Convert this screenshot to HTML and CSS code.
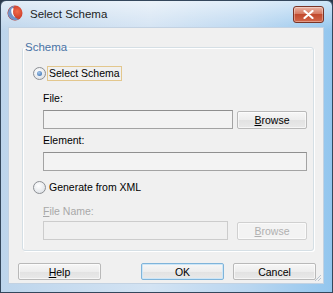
FILE: index.html
```html
<!DOCTYPE html>
<html lang="en">
<head>
    <meta charset="UTF-8">
    <title>Select Schema</title>
    <link rel="stylesheet" href="styles.css">
</head>
<body>
    <div class="window">
        <div class="titlebar">
            <svg class="app-icon" width="16" height="16" viewBox="0 0 16 16">
                <defs>
                    <radialGradient id="ball" cx="0.65" cy="0.4" r="0.7">
                        <stop offset="0" stop-color="#f26a4a"/>
                        <stop offset="1" stop-color="#b8261a"/>
                    </radialGradient>
                </defs>
                <circle cx="8" cy="8" r="7.5" fill="url(#ball)"/>
                <path d="M1 9 C1 4 4 1 8 0.8 C5 3 4.5 6 6 9 C7 12 10 14 12.5 14 C10 15.6 6 15.6 3.5 13.5 C2 12.2 1 10.8 1 9 Z" fill="#6f93c9"/>
                <path d="M4.6 3.8 C3.6 6.5 4.6 10.5 8.3 12.6 C6.2 10.4 5.4 7 6.6 3.4 C6 3.3 5.2 3.4 4.6 3.8 Z" fill="#ffffff"/>
            </svg>
            <span class="title">Select Schema</span>
            <span class="close-btn">
                <svg width="11" height="9" viewBox="0 0 11 9">
                    <path d="M1.5 1 L9.5 8 M9.5 1 L1.5 8" stroke="#ffffff" stroke-width="2.2" stroke-linecap="round"/>
                </svg>
            </span>
        </div>
        <div class="client">
            <fieldset class="group">
                <legend>Schema</legend>
                <div class="group-body">
                    <label class="radio-row">
                        <span class="radio checked"></span>
                        <span class="focus-label">Select Schema</span>
                    </label>

                    <div class="field-label">File:</div>
                    <div class="field-row">
                        <span class="input"></span>
                        <button class="btn browse"><u>B</u>rowse</button>
                    </div>

                    <div class="field-label next">Element:</div>
                    <div class="field-row">
                        <span class="input"></span>
                    </div>

                    <label class="radio-row second">
                        <span class="radio"></span>
                        <span class="radio-text">Generate from XML</span>
                    </label>

                    <div class="field-label disabled name"><u>F</u>ile Name:</div>
                    <div class="field-row wide-gap">
                        <span class="input disabled"></span>
                        <button class="btn browse" disabled><u>B</u>rowse</button>
                    </div>
                </div>
            </fieldset>

            <div class="actions">
                <button class="btn action help"><u>H</u>elp</button>
                <button class="btn action ok">OK</button>
                <button class="btn action cancel">Cancel</button>
            </div>

            <svg class="grip" width="9" height="9" viewBox="0 0 9 9">
                <path d="M8 2 L2 8 M8 5 L5 8 M8 8 L8 8" stroke="#b9c4cf" stroke-width="1"/>
            </svg>
        </div>
    </div>
</body>
</html>
```

FILE: styles.css
```css
html, body {
    margin: 0;
    padding: 0;
}
body {
    width: 333px;
    height: 293px;
    background: #2b3a4c;
    font-family: "Liberation Sans", Arial, sans-serif;
    font-size: 10.5px;
    color: #000;
}
.window {
    position: relative;
    box-sizing: border-box;
    width: 333px;
    height: 293px;
    border: 1px solid #34475c;
    border-radius: 6px 6px 0 0;
    background:
        linear-gradient(to bottom, rgba(255,255,255,0.55), rgba(255,255,255,0) 30px),
        linear-gradient(to right, #bdd5ec, #d3e3f3 45%, #b9d6f0 75%, #93c6ee);
}
.titlebar {
    display: flex;
    align-items: flex-start;
    height: 26px;
    box-sizing: border-box;
    padding: 4px 8px 0 6px;
}
.app-icon {
    display: block;
    flex: none;
}
.title {
    margin: 2px 0 0 7px;
    font-size: 11.5px;
    line-height: 14px;
    color: #1e1e1e;
}
.close-btn {
    display: flex;
    align-items: center;
    justify-content: center;
    margin: 1px 0 0 auto;
    box-sizing: border-box;
    width: 31px;
    height: 17px;
    border: 1px solid #7a3426;
    border-radius: 3px;
    background: linear-gradient(to bottom, #eab3a4, #d67a62 45%, #c24a2e 50%, #d2674a);
    box-shadow: inset 0 0 0 1px rgba(255,255,255,0.35);
}
.close-btn svg {
    display: block;
}
.client {
    position: relative;
    box-sizing: border-box;
    width: 316px;
    height: 257px;
    margin: 0 8px 8px 7px;
    padding: 12px 0 0 13px;
    background: #f0f0f0;
    border: 1px solid #c3d2e2;
}
.group {
    box-sizing: border-box;
    width: 292px;
    margin: 0;
    padding: 0;
    border: 1px solid #d5dfe5;
    border-radius: 3px;
    box-shadow: inset 1px 1px 0 #ffffff, 1px 1px 0 #ffffff;
}
.group legend {
    margin-left: 0;
    padding: 0 2px;
    line-height: 14px;
    color: #4a73a6;
    font-size: 11.5px;
}
.group-body {
    padding: 12px 6px 10px 10px;
}
.radio-row {
    display: flex;
    align-items: center;
    height: 15px;
}
.radio-row.second {
    margin-top: 9px;
}
.radio {
    box-sizing: border-box;
    width: 13px;
    height: 13px;
    border: 1px solid #8c8f94;
    border-radius: 50%;
    background: radial-gradient(circle at 40% 35%, #ffffff, #e3e6ea 70%, #d0d4d9);
    display: flex;
    align-items: center;
    justify-content: center;
}
.radio.checked::after {
    content: "";
    width: 5px;
    height: 5px;
    border-radius: 50%;
    background: radial-gradient(circle at 40% 35%, #a7c8ec, #2a64a8);
}
.focus-label {
    margin-left: 1px;
    padding: 0 1px;
    line-height: 13px;
    border: 1px solid #e3c78d;
}
.radio-text {
    margin-left: 3px;
    line-height: 13px;
}
.field-label {
    margin: 10px 0 0 10px;
    line-height: 14px;
}
.field-label.next {
    margin-top: 4px;
}
.field-label.name {
    margin-top: 9px;
}
.field-label.disabled {
    color: #a8a8a8;
}
.field-row {
    display: flex;
    align-items: center;
    gap: 4px;
    margin: 5px 0 0 10px;
}
.field-row.wide-gap {
    gap: 9px;
    margin-top: 3px;
}
.input {
    flex: 1;
    box-sizing: border-box;
    height: 19px;
    border: 1px solid #a3a3a3;
    border-top-color: #8f8f8f;
    background: #f3f3f3;
}
.input.disabled {
    border-color: #cccccc;
    background: #f0f0f0;
}
.btn {
    box-sizing: border-box;
    margin: 0;
    padding: 0;
    height: 18px;
    font-family: inherit;
    font-size: 10.5px;
    color: #000;
    border: 1px solid #b9b9b9;
    border-radius: 2px;
    background: linear-gradient(to bottom, #f7f7f7, #ededed 50%, #e2e2e2 51%, #e9e9e9);
    box-shadow: inset 0 0 0 1px rgba(255,255,255,0.6);
}
.btn.browse {
    width: 70px;
}
.btn:disabled {
    color: #b0b0b0;
    border-color: #d0d0d0;
    background: #f3f3f3;
}
.actions {
    display: flex;
    margin-top: 12px;
    margin-left: -4px;
}
.btn.action {
    width: 83px;
    height: 17px;
}
.btn.ok {
    margin-left: 40px;
    border-color: #7fb4da;
    box-shadow: inset 0 0 0 1px #cde6f7;
}
.btn.cancel {
    margin-left: 9px;
}
.grip {
    position: absolute;
    right: 1px;
    bottom: 1px;
}
```
